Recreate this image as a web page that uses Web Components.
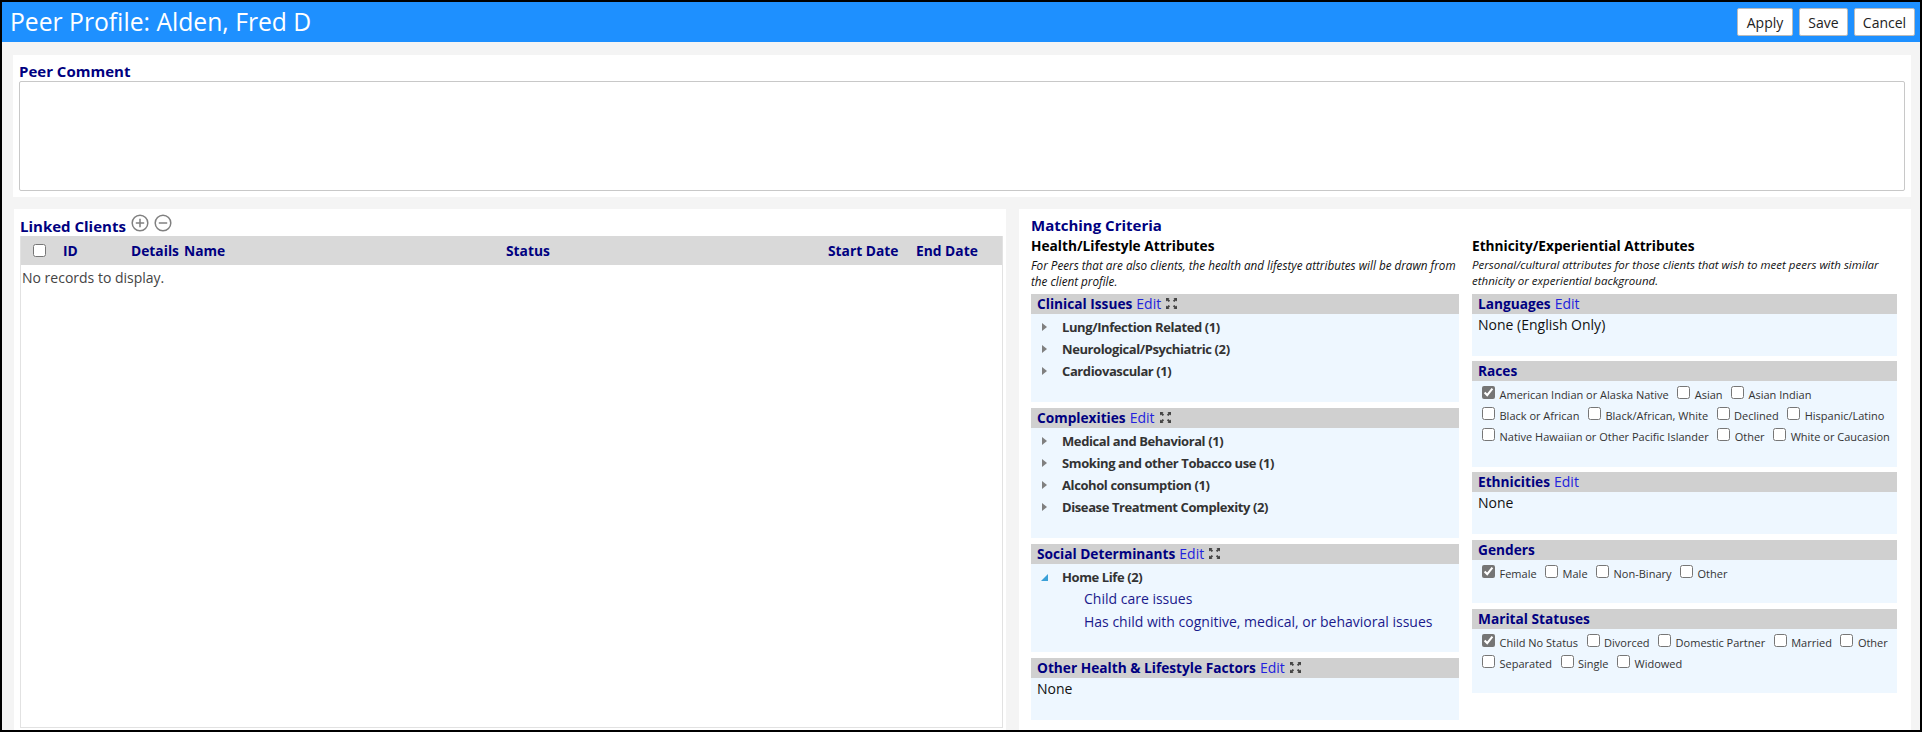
<!DOCTYPE html>
<html>
<head>
<meta charset="utf-8">
<title>Peer Profile</title>
<style>
    html, body { margin: 0; padding: 0; background: #000; }
    body { width: 1922px; height: 732px; overflow: hidden; font-family: "Open Sans", "Noto Sans", sans-serif; font-size: 14px; color: #222; }
</style>
</head>
<body>
<peer-profile>
    <title-bar slot="top" heading="Peer Profile: Alden, Fred D"></title-bar>
    <comment-panel slot="top"></comment-panel>
    <clients-panel slot="left"></clients-panel>
    <criteria-panel slot="right">
        <attr-column slot="health" heading="Health/Lifestyle Attributes" note="For Peers that are also clients, the health and lifestye attributes will be drawn from the client profile." notesize="11.7">
            <attr-section heading="Clinical Issues" edit expand size="108">
                <tree-item>Lung/Infection Related (1)</tree-item>
                <tree-item>Neurological/Psychiatric (2)</tree-item>
                <tree-item>Cardiovascular (1)</tree-item>
            </attr-section>
            <attr-section heading="Complexities" edit expand size="130">
                <tree-item>Medical and Behavioral (1)</tree-item>
                <tree-item>Smoking and other Tobacco use (1)</tree-item>
                <tree-item>Alcohol consumption (1)</tree-item>
                <tree-item>Disease Treatment Complexity (2)</tree-item>
            </attr-section>
            <attr-section heading="Social Determinants" edit expand size="108">
                <tree-item open>Home Life (2)
                    <span slot="kids">Child care issues</span>
                    <span slot="kids">Has child with cognitive, medical, or behavioral issues</span>
                </tree-item>
            </attr-section>
            <attr-section heading="Other Health &amp; Lifestyle Factors" edit expand size="62" plain>None</attr-section>
        </attr-column>
        <attr-column slot="ethnicity" heading="Ethnicity/Experiential Attributes" note="Personal/cultural attributes for those clients that wish to meet peers with similar ethnicity or experiential background." notesize="11.5">
            <attr-section heading="Languages" edit size="62" plain gap="5">None (English Only)</attr-section>
            <attr-section heading="Races" size="106" checks gap="5">
                <check-item checked>American Indian or Alaska Native</check-item>
                <check-item>Asian</check-item>
                <check-item>Asian Indian</check-item>
                <check-item>Black or African</check-item>
                <check-item>Black/African, White</check-item>
                <check-item>Declined</check-item>
                <check-item>Hispanic/Latino</check-item>
                <check-item>Native Hawaiian or Other Pacific Islander</check-item>
                <check-item>Other</check-item>
                <check-item>White or Caucasion</check-item>
            </attr-section>
            <attr-section heading="Ethnicities" edit size="62" plain gap="6">None</attr-section>
            <attr-section heading="Genders" size="63" checks gap="6">
                <check-item checked>Female</check-item>
                <check-item>Male</check-item>
                <check-item>Non-Binary</check-item>
                <check-item>Other</check-item>
            </attr-section>
            <attr-section heading="Marital Statuses" size="84" checks>
                <check-item checked>Child No Status</check-item>
                <check-item>Divorced</check-item>
                <check-item>Domestic Partner</check-item>
                <check-item>Married</check-item>
                <check-item>Other</check-item>
                <check-item>Separated</check-item>
                <check-item>Single</check-item>
                <check-item>Widowed</check-item>
            </attr-section>
        </attr-column>
    </criteria-panel>
</peer-profile>

<script>
// small helper, every element just stamps its markup in an open shadow root
function stamp(el, html) {
    const shadow = el.attachShadow({ mode: 'open' });
    shadow.innerHTML = html;
    return shadow;
}

class PeerProfile extends HTMLElement {
    connectedCallback() {
        stamp(this, `
            <style>
                :host { display: block; box-sizing: border-box; width: 1922px; height: 732px; padding: 2px; }
                .page { height: 100%; background: #f4f4f4; display: flex; flex-direction: column; }
                .row { flex: 1; display: flex; margin: 12px 9px 0 12px; min-height: 0; gap: 13px; }
                ::slotted([slot=left]) { width: 992px; }
                ::slotted([slot=right]) { flex: 1; }
            </style>
            <div class="page">
                <slot name="top"></slot>
                <div class="row">
                    <slot name="left"></slot>
                    <slot name="right"></slot>
                </div>
            </div>
        `);
    }
}
customElements.define("peer-profile", PeerProfile);

class TitleBar extends HTMLElement {
    connectedCallback() {
        stamp(this, `
            <style>
                :host { display: flex; align-items: center; justify-content: space-between; height: 40px; background: #1e90ff; padding: 0 5px 0 8px; }
                h1 { margin: 0; font-size: 24.7px; font-weight: 400; color: #fff; line-height: 40px; }
                .btns { display: flex; gap: 6px; }
                button { font: 14px "Open Sans", sans-serif; height: 28px; padding: 0; background: #fff; color: #222; border: 1px solid #bbb; border-radius: 2px; }
                .a { width: 56px; } .s { width: 49px; } .c { width: 61px; }
            </style>
            <h1>${this.getAttribute('heading')}</h1>
            <div class="btns">
                <button class="a">Apply</button>
                <button class="s">Save</button>
                <button class="c">Cancel</button>
            </div>
        `);
    }
}
customElements.define("title-bar", TitleBar);

class CommentPanel extends HTMLElement {
    connectedCallback() {
        stamp(this, `
            <style>
                :host { display: block; box-sizing: border-box; height: 142px; margin: 13px 9px 0 11px; background: #fff; padding: 7px 6px 0 6px; }
                label { display: block; font-weight: 700; font-size: 15px; line-height: 18px; margin-bottom: 1px; color: #000080; }
                textarea { display: block; box-sizing: border-box; width: 100%; height: 110px; border: 1px solid #c8c8c8; border-radius: 2px; resize: none; margin: 0; outline: none; }
            </style>
            <label>Peer Comment</label>
            <textarea></textarea>
        `);
    }
}
customElements.define("comment-panel", CommentPanel);

class ClientsPanel extends HTMLElement {
    connectedCallback() {
        stamp(this, `
            <style>
                :host { display: block; box-sizing: border-box; background: #fff; padding: 0 3px 2px 6px; }
                .wrap { height: 100%; display: flex; flex-direction: column; }
                .title { height: 27px; display: flex; align-items: flex-end; gap: 5px; font-weight: 700; font-size: 15px; color: #000080; }
                .title span { line-height: 19px; }
                svg { display: block; margin-bottom: 4px; }
                .grid { flex: 1; border: 1px solid #e2e2e2; border-top: 0; }
                .head { display: grid; grid-template-columns: 42px 68px 53px 322px 322px 88px 1fr; align-items: center; height: 29px; background: #d9d9d9; font-weight: 700; color: #000080; font-size: 13.8px; }
                .head input { width: 13px; height: 13px; margin: 0 0 0 12px; display: block; }
                .empty { padding: 3px 1px; font-size: 14px; color: #444; }
            </style>
            <div class="wrap">
                <div class="title">
                    <span>Linked Clients</span>
                    <svg width="18" height="18" viewBox="0 0 18 18" fill="none" stroke="#808080" stroke-width="1.5"><circle cx="9" cy="9" r="7.8"/><path d="M9 4.8v8.4M4.8 9h8.4"/></svg>
                    <svg width="18" height="18" viewBox="0 0 18 18" fill="none" stroke="#808080" stroke-width="1.5"><circle cx="9" cy="9" r="7.8"/><path d="M4.8 9h8.4"/></svg>
                </div>
                <div class="grid">
                    <div class="head">
                        <div><input type="checkbox"></div>
                        <div>ID</div><div>Details</div><div>Name</div><div>Status</div><div>Start Date</div><div>End Date</div>
                    </div>
                    <div class="empty">No records to display.</div>
                </div>
            </div>
        `);
    }
}
customElements.define("clients-panel", ClientsPanel);

class CriteriaPanel extends HTMLElement {
    connectedCallback() {
        stamp(this, `
            <style>
                :host { display: block; box-sizing: border-box; background: #fff; padding: 7px 13px 0 12px; }
                h2 { margin: 0; font-size: 15px; font-weight: 700; line-height: 19px; color: #000080; }
                .cols { display: grid; grid-template-columns: 428px 425px; column-gap: 13px; }
            </style>
            <h2>Matching Criteria</h2>
            <div class="cols">
                <slot name="health"></slot>
                <slot name="ethnicity"></slot>
            </div>
        `);
    }
}
customElements.define("criteria-panel", CriteriaPanel);

class AttrColumn extends HTMLElement {
    connectedCallback() {
        stamp(this, `
            <style>
                :host { display: block; }
                h3 { margin: 0; font-size: 13.7px; font-weight: 700; line-height: 22px; color: #000; }
                p { margin: 0; font-size: ${this.getAttribute('notesize')}px; font-style: italic; line-height: 16px; color: #111; height: 37px; box-sizing: border-box; }
            </style>
            <h3>${this.getAttribute('heading')}</h3>
            <p>${this.getAttribute('note')}</p>
            <slot></slot>
        `);
    }
}
customElements.define("attr-column", AttrColumn);

class AttrSection extends HTMLElement {
    connectedCallback() {
        const edit = this.hasAttribute('edit') ? '<a>Edit</a>' : '';
        const expand = this.hasAttribute('expand') ? `
            <svg width="11" height="11" viewBox="0 0 11 11" fill="#444"><path d="M0 0h3.6L2.5 1.1l1.6 1.6-1.4 1.4-1.6-1.6L0 3.6zM11 0v3.6L9.9 2.5 8.3 4.1 6.9 2.7l1.6-1.6L7.4 0zM0 11V7.4l1.1 1.1 1.6-1.6 1.4 1.4-1.6 1.6L3.6 11zM11 11H7.4l1.1-1.1-1.6-1.6 1.4-1.4 1.6 1.6L11 7.4z"/></svg>` : '';
        const kind = this.hasAttribute('checks') ? 'checks' : this.hasAttribute('plain') ? 'plain' : 'tree';
        stamp(this, `
            <style>
                :host { display: block; margin-bottom: ${this.getAttribute('gap') || 6}px; }
                .bar { height: 20px; background: #d0d0d0; display: flex; align-items: center; gap: 4px; padding-left: 6px; font-size: 14px; line-height: 20px; }
                b { color: #000080; font-weight: 700; font-size: 13.7px; }
                a { color: #2222dd; }
                svg { margin: -2px 0 0 1px; }
                .body { box-sizing: border-box; height: ${this.getAttribute('size') - 20}px; background: #eef7ff; }
                .plain { padding: 1px 6px 0; font-size: 14px; line-height: 20px; color: #111; }
                .tree { padding-top: 2px; }
                .checks { padding: 3px 0 0 10px; display: flex; flex-wrap: wrap; column-gap: 8.5px; align-content: flex-start; }
            </style>
            <div class="bar"><b>${this.getAttribute('heading')}</b>${edit}${expand}</div>
            <div class="body ${kind}"><slot></slot></div>
        `);
    }
}
customElements.define("attr-section", AttrSection);

class TreeItem extends HTMLElement {
    connectedCallback() {
        const open = this.hasAttribute('open');
        const arrow = open
            ? '<svg width="7" height="7" viewBox="0 0 7 7"><path d="M7 0v7H0z" fill="#3aa0d8"/></svg>'
            : '<svg width="5" height="8" viewBox="0 0 5 8"><path d="M0 0l5 4-5 4z" fill="#808080"/></svg>';
        stamp(this, `
            <style>
                :host { display: block; }
                .line { display: flex; align-items: center; height: 22px; font-weight: 700; font-size: 13px; letter-spacing: -0.4px; color: #333; }
                .ico { width: 31px; padding-left: ${open ? 10 : 11}px; box-sizing: border-box; display: flex; }
                .kids { padding-left: 53px; color: #1a1a8c; font-size: 14px; }
                ::slotted([slot=kids]) { display: block; line-height: 22.5px; }
            </style>
            <div class="line"><span class="ico">${arrow}</span><slot></slot></div>
            <div class="kids"><slot name="kids"></slot></div>
        `);
    }
}
customElements.define("tree-item", TreeItem);

class CheckItem extends HTMLElement {
    connectedCallback() {
        stamp(this, `
            <style>
                :host { display: inline-flex; align-items: center; height: 21px; font-size: 11px; color: #333; white-space: nowrap; }
                input { width: 13px; height: 13px; margin: 0 4.5px 5px 0; accent-color: #757575; }
            </style>
            <input type="checkbox" ${this.hasAttribute('checked') ? 'checked' : ''}><slot></slot>
        `);
    }
}
customElements.define("check-item", CheckItem);
</script>
</body>
</html>
